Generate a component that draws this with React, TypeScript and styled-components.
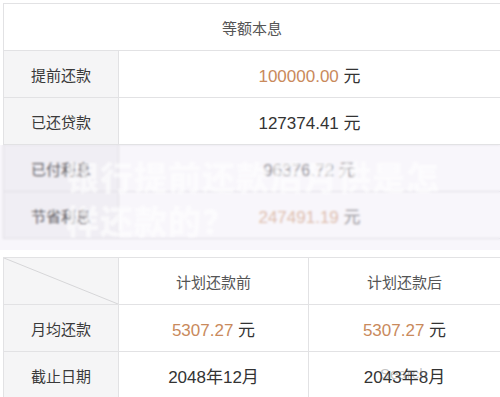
import React from "react"
import styled, { createGlobalStyle } from "styled-components"

const GlobalStyle = createGlobalStyle`
  body {
    margin: 0;
    background: #ffffff;
    font-family: "Liberation Sans", "Noto Sans CJK SC", sans-serif;
  }
`

const Page = styled.div`
  position: relative;
  width: 500px;
  height: 397px;
  overflow: hidden;
  padding: 3px 0 0 3px;
  box-sizing: border-box;
  display: flex;
  flex-direction: column;
  gap: 18px;
`

const Table = styled.div<{ $cols: string }>`
  display: grid;
  grid-template-columns: ${(p) => p.$cols};
  grid-auto-rows: 47px;
  width: 498px;
  border-top: 1px solid #e2e2e4;
  border-left: 1px solid #e2e2e4;
  box-sizing: border-box;
`

const Cell = styled.div<{ $label?: boolean; $span?: boolean }>`
  position: relative;
  display: flex;
  align-items: center;
  justify-content: center;
  border-right: 1px solid #e2e2e4;
  border-bottom: 1px solid #e2e2e4;
  box-sizing: border-box;
  background: ${(p) => (p.$label ? "#f5f5f6" : "#ffffff")};
  grid-column: ${(p) => (p.$span ? "1 / -1" : "auto")};
  font-size: 15px;
  color: #3a3a3a;
`

const Head = styled.span`
  font-size: 15px;
  color: #555;
`

const Amount = styled.span<{ $accent?: boolean; $faded?: boolean }>`
  font-size: 17px;
  color: #333;
  opacity: ${(p) => (p.$faded ? 0.6 : 1)};
  b {
    font-weight: normal;
    color: ${(p) => (p.$accent ? "#c98a5c" : "#333")};
  }
`

const Diagonal = styled.svg`
  position: absolute;
  inset: 0;
  width: 100%;
  height: 100%;
`

const Veil = styled.div`
  position: absolute;
  left: 0;
  right: 0;
  top: 145px;
  height: 105px;
  background: rgba(222, 216, 236, 0.22);
  backdrop-filter: blur(0.8px);
  display: flex;
  flex-direction: column;
  justify-content: center;
  padding-left: 66px;
  gap: 6px;
`

const VeilTitle = styled.div`
  font-family: "Noto Sans CJK SC", sans-serif;
  font-size: 33px;
  font-weight: 900;
  line-height: 38px;
  color: rgba(255, 255, 255, 0.6);
  letter-spacing: 1px;
  white-space: nowrap;
  filter: blur(0.8px);
`

const Mark = styled.span`
  position: absolute;
  left: 380px;
  top: 365px;
  font-size: 15px;
  color: rgba(120, 120, 120, 0.45);
`

const Money = ({ value, accent, faded }: { value: string; accent?: boolean; faded?: boolean }) => (
  <Amount $accent={accent} $faded={faded}>
    <b>{value}</b> 元
  </Amount>
)

export default function App() {
  return (
    <>
      <GlobalStyle />
      <Page>
        <Table $cols="115px 1fr">
          <Cell $span>
            <Head>等额本息</Head>
          </Cell>
          <Cell $label>提前还款</Cell>
          <Cell>
            <Money value="100000.00" accent />
          </Cell>
          <Cell $label>已还贷款</Cell>
          <Cell>
            <Money value="127374.41" />
          </Cell>
          <Cell $label>已付利息</Cell>
          <Cell>
            <Money value="96376.72" faded />
          </Cell>
          <Cell $label>节省利息</Cell>
          <Cell>
            <Money value="247491.19" accent faded />
          </Cell>
        </Table>

        <Table $cols="115px 190px 1fr">
          <Cell $label>
            <Diagonal viewBox="0 0 114 46" preserveAspectRatio="none">
              <line x1="0" y1="0" x2="114" y2="46" stroke="#d6d6d8" strokeWidth="1" />
            </Diagonal>
          </Cell>
          <Cell>
            <Head>计划还款前</Head>
          </Cell>
          <Cell>
            <Head>计划还款后</Head>
          </Cell>
          <Cell $label>月均还款</Cell>
          <Cell>
            <Money value="5307.27" accent />
          </Cell>
          <Cell>
            <Money value="5307.27" accent />
          </Cell>
          <Cell $label>截止日期</Cell>
          <Cell>
            <Amount>2048年12月</Amount>
          </Cell>
          <Cell>
            <Amount>2043年8月</Amount>
          </Cell>
        </Table>

        <Veil>
          <VeilTitle>银行提前还款后月供是怎</VeilTitle>
          <VeilTitle>样还款的？</VeilTitle>
        </Veil>
        <Mark>Search</Mark>
      </Page>
    </>
  )
}
